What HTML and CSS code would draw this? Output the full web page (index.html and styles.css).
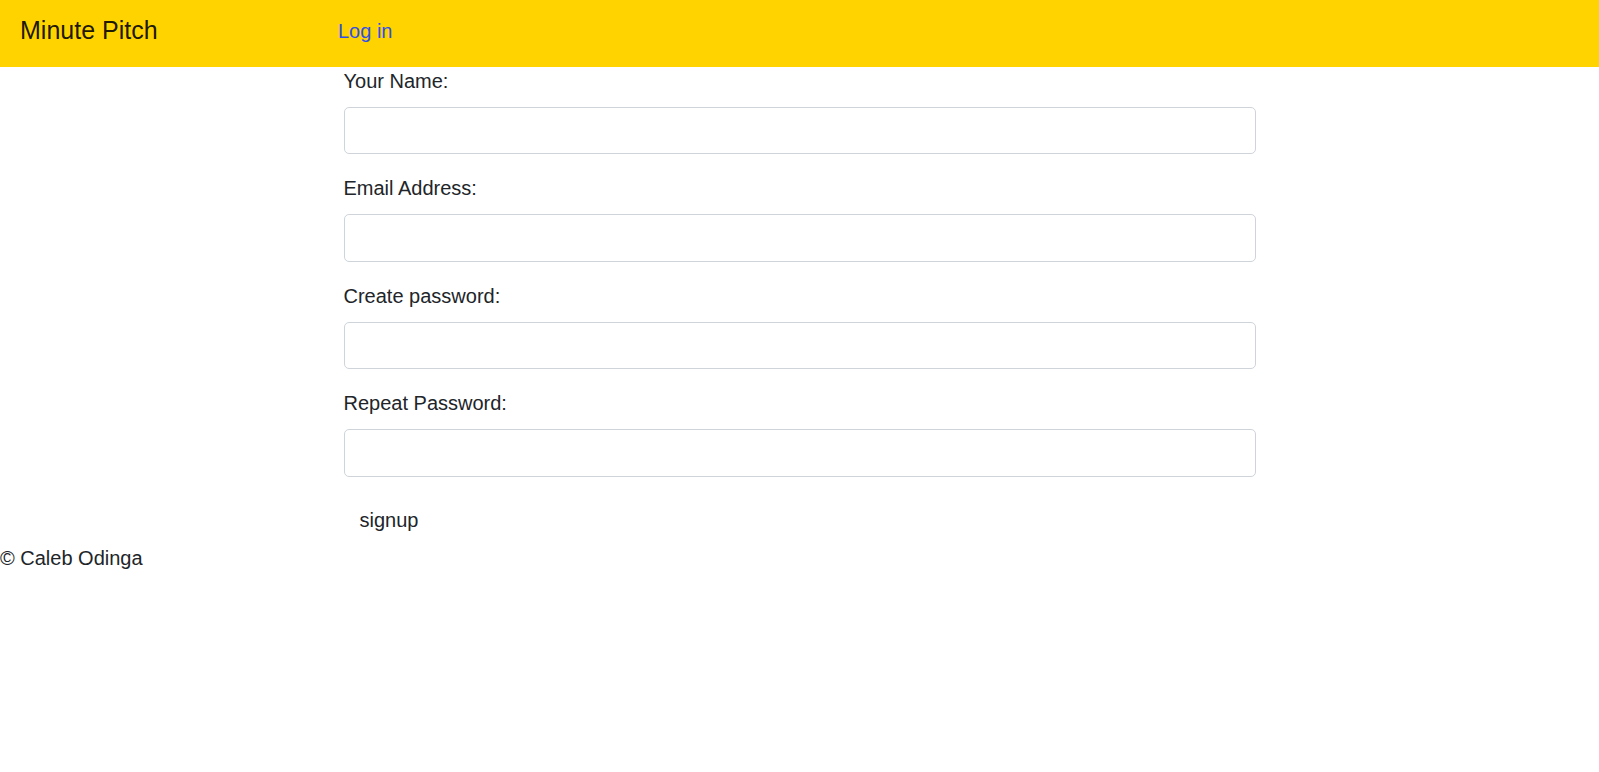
FILE: index.html
```html
<!DOCTYPE html>
<html lang="en">
<head>
<meta charset="utf-8">
<title>Minute Pitch - Sign up</title>
<link rel="stylesheet" href="styles.css">
</head>
<body>
<nav class="navbar">
  <a class="brand" href="#">Minute Pitch</a>
  <ul class="nav-links">
    <li><a class="nav-link" href="#">Log in</a></li>
  </ul>
</nav>
<main class="content">
  <form class="signup-form">
    <div class="form-group">
      <label class="form-label" for="name">Your Name:</label>
      <input class="form-control" id="name" type="text">
    </div>
    <div class="form-group">
      <label class="form-label" for="email">Email Address:</label>
      <input class="form-control" id="email" type="email">
    </div>
    <div class="form-group">
      <label class="form-label" for="pw">Create password:</label>
      <input class="form-control" id="pw" type="password">
    </div>
    <div class="form-group">
      <label class="form-label" for="pw2">Repeat Password:</label>
      <input class="form-control" id="pw2" type="password">
    </div>
    <button class="btn" type="submit">signup</button>
  </form>
</main>
<footer class="footer">© Caleb Odinga</footer>
</body>
</html>
```
FILE: styles.css
```css
* {
  box-sizing: border-box;
}

html, body {
  margin: 0;
  padding: 0;
}

body {
  font-family: "Liberation Sans", Arial, sans-serif;
  font-size: 20px;
  line-height: 30px;
  color: #212529;
  background: #fff;
}

.navbar {
  display: flex;
  align-items: flex-start;
  height: 67px;
  padding: 12px 20px 0;
  background: #ffd300;
}

.brand {
  flex: 0 0 318px;
  font-size: 25px;
  line-height: 37.5px;
  color: rgba(0, 0, 0, 0.9);
  text-decoration: none;
}

.nav-links {
  list-style: none;
  margin: 4px 0 0;
  padding: 0;
  display: flex;
}

.nav-link {
  color: #2f4fe6;
  text-decoration: none;
}

.content {
  display: flex;
  justify-content: center;
}

.signup-form {
  width: 912px;
}

.form-group {
  display: flex;
  flex-direction: column;
  margin-bottom: 20px;
}

.form-group:last-of-type {
  margin-bottom: 19px;
}

.form-label {
  line-height: 28px;
  margin-bottom: 12px;
}

.form-control {
  height: 47.4px;
  width: 100%;
  padding: 7px 15px;
  font: inherit;
  color: #495057;
  background: #fff;
  border: 1px solid #ced4da;
  border-radius: 5px;
  outline: none;
}

.btn {
  display: block;
  font: inherit;
  line-height: 30px;
  color: #212529;
  background: transparent;
  border: 1px solid transparent;
  border-radius: 5px;
  padding: 8px 15px 7px;
  cursor: pointer;
}

.footer {
  line-height: 30px;
}
```
